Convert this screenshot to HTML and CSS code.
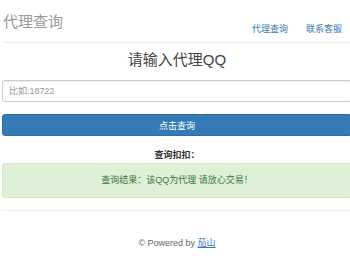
FILE: index.html
```html
<!DOCTYPE html>
<html lang="zh-CN">
<head>
    <meta charset="UTF-8">
    <meta name="viewport" content="width=device-width, initial-scale=1.0">
    <title>代理查询</title>
    <link rel="stylesheet" href="styles.css">
</head>
<body>
    <div class="wrap">
        <div class="header">
            <span class="brand">代理查询</span>
            <div class="nav">
                <a href="#">代理查询</a>
                <a href="#">联系客服</a>
            </div>
        </div>

        <h3 class="title">请输入代理QQ</h3>
        <input class="field" type="text" placeholder="比如:18722">
        <button class="btn">点击查询</button>

        <div class="label">查询扣扣：</div>
        <div class="alert">查询结果：该QQ为代理 请放心交易！</div>

        <div class="footer">
            &copy; Powered by <a href="#">茄山</a>
        </div>
    </div>
</body>
</html>
```

FILE: styles.css
```css
html, body {
    margin: 0;
    overflow: hidden;
}
body {
    font-family: "Liberation Sans", "Noto Sans CJK SC", sans-serif;
    font-size: 9px;
    color: #333;
    background: #fff;
}
a {
    color: #337ab7;
    text-decoration: none;
}
.wrap {
    width: 350px;
    margin-left: 2px;
}
.header {
    display: flex;
    justify-content: space-between;
    height: 42px;
    border-bottom: 1px solid #eee;
    margin-left: 1px;
}
.brand {
    font-size: 15px;
    line-height: 18px;
    padding-top: 13px;
    color: #999;
}
.nav {
    display: flex;
    gap: 18px;
    padding-top: 23px;
    padding-right: 10px;
    line-height: 12px;
}
.title {
    margin: 8px 0 0;
    font-size: 15px;
    font-weight: normal;
    line-height: 18px;
    text-align: center;
    color: #444;
}
.field {
    display: block;
    box-sizing: border-box;
    width: 100%;
    height: 22px;
    margin-top: 11px;
    padding: 0 6px;
    font-family: inherit;
    font-size: 9px;
    border: 1px solid #ccc;
    border-radius: 3px;
    box-shadow: inset 0 1px 1px rgba(0,0,0,0.075);
    outline: none;
}
.field::placeholder {
    color: #999;
}
.btn {
    display: block;
    box-sizing: border-box;
    width: 100%;
    height: 22px;
    margin-top: 12px;
    font-family: inherit;
    font-size: 9px;
    color: #fff;
    background: #337ab7;
    border: 1px solid #2e6da4;
    border-radius: 3px;
}
.label {
    margin-top: 13px;
    font-weight: bold;
    line-height: 12px;
    text-align: center;
}
.alert {
    box-sizing: border-box;
    height: 35px;
    margin-top: 2px;
    line-height: 33px;
    text-align: center;
    color: #3c763d;
    background: #dff0d8;
    border: 1px solid #d6e9c6;
    border-radius: 3px;
}
.footer {
    margin-top: 12px;
    padding-top: 26px;
    border-top: 1px solid #eee;
    line-height: 12px;
    text-align: center;
    color: #666;
}
.footer a {
    text-decoration: underline;
}
```
